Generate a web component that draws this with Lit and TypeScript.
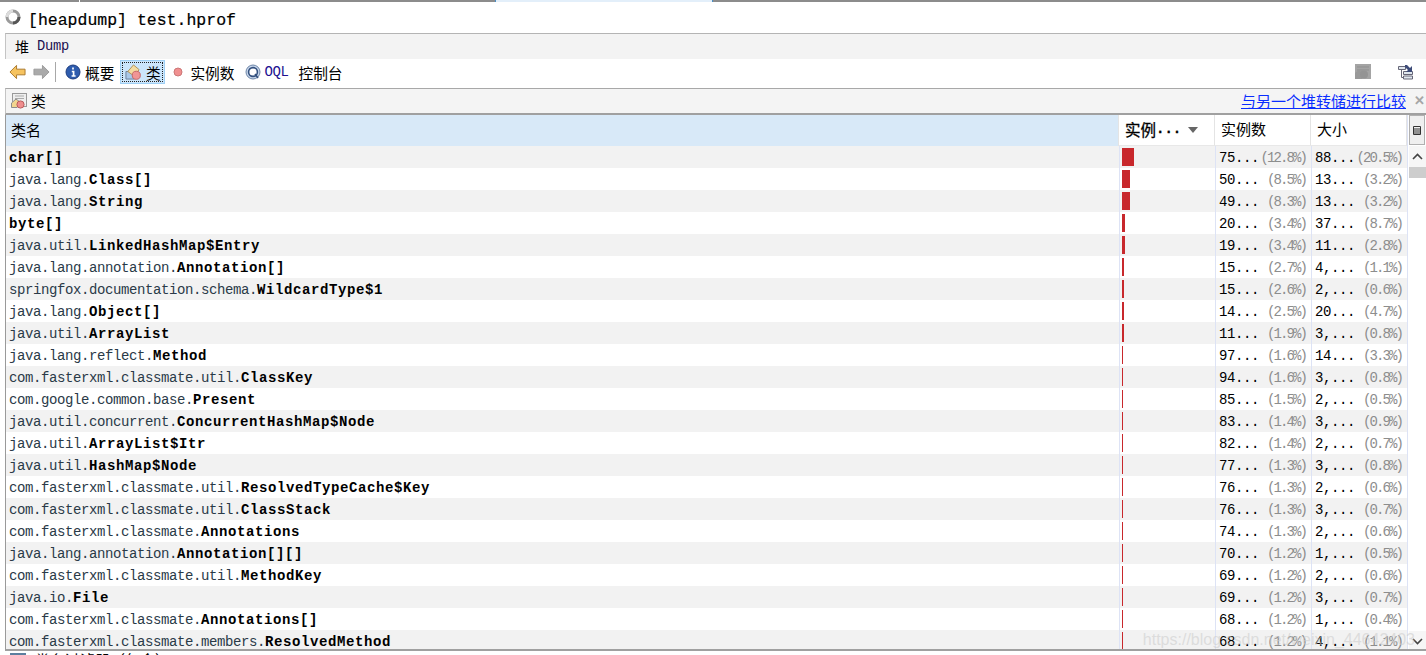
import { LitElement, html, css, svg } from "lit";
import { customElement } from "lit/decorators.js";

type Row = [string, string, string, string, string, string, number];
const rows: Row[] = [
  ["", "char[]", "75", "12.8", "88", "20.5", 12],
  ["java.lang.", "Class[]", "50", "8.5", "13", "3.2", 8],
  ["java.lang.", "String", "49", "8.3", "13", "3.2", 8],
  ["", "byte[]", "20", "3.4", "37", "8.7", 3],
  ["java.util.", "LinkedHashMap$Entry", "19", "3.4", "11", "2.8", 3],
  ["java.lang.annotation.", "Annotation[]", "15", "2.7", "4,", "1.1", 2],
  ["springfox.documentation.schema.", "WildcardType$1", "15", "2.6", "2,", "0.6", 2],
  ["java.lang.", "Object[]", "14", "2.5", "20", "4.7", 2],
  ["java.util.", "ArrayList", "11", "1.9", "3,", "0.8", 2],
  ["java.lang.reflect.", "Method", "97", "1.6", "14", "3.3", 1],
  ["com.fasterxml.classmate.util.", "ClassKey", "94", "1.6", "3,", "0.8", 1],
  ["com.google.common.base.", "Present", "85", "1.5", "2,", "0.5", 1],
  ["java.util.concurrent.", "ConcurrentHashMap$Node", "83", "1.4", "3,", "0.9", 1],
  ["java.util.", "ArrayList$Itr", "82", "1.4", "2,", "0.7", 1],
  ["java.util.", "HashMap$Node", "77", "1.3", "3,", "0.8", 1],
  ["com.fasterxml.classmate.util.", "ResolvedTypeCache$Key", "76", "1.3", "2,", "0.6", 1],
  ["com.fasterxml.classmate.util.", "ClassStack", "76", "1.3", "3,", "0.7", 1],
  ["com.fasterxml.classmate.", "Annotations", "74", "1.3", "2,", "0.6", 1],
  ["java.lang.annotation.", "Annotation[][]", "70", "1.2", "1,", "0.5", 1],
  ["com.fasterxml.classmate.util.", "MethodKey", "69", "1.2", "2,", "0.6", 1],
  ["java.io.", "File", "69", "1.2", "3,", "0.7", 1],
  ["com.fasterxml.classmate.", "Annotations[]", "68", "1.2", "1,", "0.4", 1],
  ["com.fasterxml.classmate.members.", "ResolvedMethod", "68", "1.2", "4,", "1.1", 1],
];

const classIcon = svg`<svg class="ic16" viewBox="0 0 17 17"><path d="M1 8h9v8H1z" fill="#a9c8e8" stroke="#6b7f99"/><path d="M3 8 9 1l6 5-5 7z" fill="#f4dba0" stroke="#b08f52"/><circle cx="12" cy="12" r="4.300" fill="#f09595" stroke="#c26464"/></svg>`;
const tabIcon = svg`<svg class="ic16" viewBox="0 0 16 16"><rect x="1.500" y=".5" width="14" height="13" fill="#eee" stroke="#999"/><path d="M4 3h9M4 5.500h9" stroke="#aaa"/><path d="M.5 10 5 6l4 3-3 5.500H.5z" fill="#f2d58f" stroke="#8d8d8d"/><circle cx="9.500" cy="11.500" r="3.600" fill="#ef8d8d" stroke="#b95a5a"/></svg>`;

@customElement("app-root")
export class AppRoot extends LitElement {
  static styles = css`
    :host { display: block; width: 1426px; height: 655px; overflow: hidden; background: #fff; position: relative; font-family: "Noto Sans CJK SC", sans-serif; color: #000; }
    .tabs { height: 2px; display: flex; background: #fff; }
    .tabs div { height: 2px; box-sizing: border-box; background: #8c8c8c; }
    .tabs .t1 { width: 80px; border-right: 1px solid #fff; }
    .tabs .t2 { width: 416px; border-right: 1px solid #4b8fc4; }
    .tabs .t3 { width: 217px; background: #e3effa; border-right: 1px solid #4b8fc4; }
    .tabs .t4 { flex: 1; }
    .title { height: 31px; box-sizing: border-box; display: flex; align-items: center; gap: 7px; padding: 0 0 0 5px; font: 16.500px/31px "Liberation Mono", monospace; white-space: pre; -webkit-text-stroke: .2px #000; }
    .spin { width: 16px; height: 16px; margin-top: -2px; }
    .title span { padding-top: 5px; }
    .sub { margin-left: 5px; height: 25px; background: #f3f3f3; border-top: 1px solid #b4b4b4; border-left: 1px solid #c4c4c4; display: flex; align-items: center; padding-left: 9px; gap: 8px; font-size: 14px; line-height: 23px; }
    .sub .en { font: 13.750px "Liberation Mono", monospace; letter-spacing: -.25px; color: #201050; }
    .bar { height: 29px; box-sizing: border-box; padding: 0 0 3px 9px; display: flex; align-items: center; font-size: 14.700px; white-space: nowrap; }
    .bar svg { flex: none; }
    .sep { width: 1px; height: 20px; background: #a8a8a8; margin: 0 9px 0 5px; }
    .item { display: flex; align-items: center; gap: 4px; }
    .fwd { margin-left: 7px; }
    .sel { height: 24px; width: 45px; box-sizing: border-box; margin: 0 8px 0 6px; background: #cbe5fb; border: 1px solid #9fd0f5; outline: 1px dotted #222; outline-offset: -3px; justify-content: center; gap: 5px; }
    .count { gap: 7px; }
    .oql { margin-left: 11px; gap: 3px; }
    .ql { font: 14px "Liberation Mono", monospace; letter-spacing: -.4px; color: #201090; }
    .console { margin-left: 7px; }
    .spacer { flex: 1; }
    .tool2 { margin: 0 12px 0 27px; }
    .ic16 { width: 16px; height: 16px; display: block; }
    .panelHead { height: 27px; box-sizing: border-box; background: #f4f4f4; margin-left: 5px; border-top: 1px solid #a8a8a8; border-left: 1px solid #c4c4c4; border-bottom: 2px solid #a0a0a0; display: flex; align-items: center; padding: 0 0 1px 5px; gap: 4px; font-size: 14.700px; }
    .link { color: #0a2dff; text-decoration: underline; font-size: 15px; margin: 0 2px 0 auto; }
    .close { color: #a6a6a6; font: bold 13px "Liberation Sans", sans-serif; width: 14px; text-align: center; }
    .table { margin-left: 5px; border-left: 1px solid #9a9a9a; height: 536px; overflow: hidden; position: relative; display: grid; grid-template-columns: 1fr 19px; border-bottom: 2px solid #a0a0a0; box-sizing: border-box; }
    .head { display: grid; grid-template-columns: 1113px 96px 96px 96px; height: 31px; box-sizing: border-box; }
    .head > div { display: flex; align-items: center; padding: 0 0 3px 6px; font-size: 15px; border-right: 1px solid #e4e4e4; border-bottom: 1px solid #e8e8e8; box-sizing: border-box; }
    .head .name { background: #d8e9f8; border-bottom: 0; padding-left: 5px; }
    .head .act { font-size: 15.500px; -webkit-text-stroke: .3px #000; }
    .dots { font: bold 14px "Liberation Mono", monospace; }
    .tri { width: 0; height: 0; border: 5px solid transparent; border-top: 6px solid #666; border-bottom: 0; margin: 3px 0 0 7px; }
    .row { display: grid; grid-template-columns: 1113px 96px 96px 96px; height: 22px; font: 14px/25px "Liberation Mono", monospace; letter-spacing: -.4px; }
    .row:nth-child(odd) { background: #f2f2f2; }
    .row > div { box-sizing: border-box; }
    .cn { padding-left: 3px; color: #2a3a48; white-space: nowrap; overflow: hidden; }
    .cn b { color: #000; letter-spacing: .6px; }
    .barc { padding: 2px 0 2px 2px; border-left: 1px solid #dde3f5; }
    .fill { background: #c8282c; height: 18px; }
    .num { display: flex; justify-content: space-between; padding: 0 5px 0 3px; border-left: 1px solid #dde3f5; white-space: nowrap; }
    .num i { font-style: normal; font-size: 14px; letter-spacing: -1.900px; color: #8d8d8d; }
    .scroll { display: flex; flex-direction: column; background: #fff; border-left: 1px solid #dde3f5; padding-left: 1px; }
    .corner { width: 16px; height: 30px; box-sizing: border-box; margin-bottom: 1px; background: #efefef; border: 1px solid #b0b0b0; display: flex; align-items: center; justify-content: center; }
    .arrow { height: 21px; display: flex; align-items: center; justify-content: center; background: #f6f6f6; }
    .thumb { height: 11px; background: #cdcdcd; }
    .track { flex: 1; background: #fff; }
    .mark { position: absolute; right: 11px; bottom: 0; color: rgba(205, 205, 205, .6); font: 16px "Liberation Sans", sans-serif; }
    .foot { height: 4px; overflow: hidden; display: flex; gap: 9px; padding-left: 10px; font-size: 15px; line-height: 20px; }
    .foot i { display: block; width: 16px; height: 2px; margin-top: 2px; background: #5d7f9f; }
    .foot span { margin-top: -1px; }
  `;

  render() {
    return html`
      <div class="tabs"><div class="t1"></div><div class="t2"></div><div class="t3"></div><div class="t4"></div></div>
      <div class="title">
        <svg class="spin" viewBox="0 0 16 16"><circle cx="8" cy="8" r="6" fill="none" stroke="#9a9a9a" stroke-width="3"/><path d="M2 8a6 6 0 0 1 6-6" fill="none" stroke="#dcdcdc" stroke-width="3"/><path d="M8 14a6 6 0 0 0 6-6" fill="none" stroke="#555" stroke-width="3"/></svg>
        <span>[heapdump] test.hprof</span>
      </div>
      <div class="sub"><span>堆</span><span class="en">Dump</span></div>
      <div class="bar">
        <svg width="17" height="16" viewBox="0 0 18 16"><path d="M8 1 1 8l7 7v-4h9V5H8z" fill="#f6c35f" stroke="#a9772a"/></svg>
        <svg class="fwd" width="17" height="16" viewBox="0 0 18 16"><path d="M10 1l7 7-7 7v-4H1V5h9z" fill="#aaa" stroke="#999"/></svg>
        <span class="sep"></span>
        <span class="item"><svg class="ic16" viewBox="0 0 16 16"><circle cx="8" cy="8" r="7" fill="#2e5cae" stroke="#1d3d80"/><path d="M8 3.500v2M6.800 7.500H8.600V12M6.600 12h4" stroke="#fff" stroke-width="1.700" fill="none"/></svg>概要</span>
        <span class="item sel">${classIcon}<span>类</span></span>
        <span class="item count"><svg width="10" height="10" viewBox="0 0 10 10"><circle cx="5" cy="5" r="4" fill="#f09090" stroke="#c77"/></svg><span>实例数</span></span>
        <span class="item oql"><svg class="ic16" viewBox="0 0 16 16"><circle cx="8" cy="8" r="7" fill="#c5d4ea" stroke="#6f87a8"/><circle cx="8" cy="8" r="4.400" fill="#fff" stroke="#33507e" stroke-width="1.600"/><path d="M10 10l3 4" stroke="#33507e" stroke-width="1.600"/></svg><span class="ql">OQL</span><span class="console">控制台</span></span>
        <span class="spacer"></span>
        <svg class="ic16" viewBox="0 0 16 16"><rect width="16" height="15" fill="#a4a4a4"/><path d="M2 3h12M2 6h12" stroke="#8f8f8f"/><path d="M0 9l5-4 4 3-2 7H0z" fill="#999"/><circle cx="9" cy="10.500" r="4" fill="#949494"/></svg>
        <svg class="ic16 tool2" viewBox="0 0 16 16"><path d="M.5 2.500h7v3h-7zM5.500 7.500h9v3h-9zM5.500 12h9v3h-9z" fill="#dfe6ee" stroke="#667"/><path d="M3.500 5.500v8h2" fill="none" stroke="#667"/><path d="M7 1h2l3 3 2-2v6H8l2-2-3-3z" fill="#3c4a78"/></svg>
      </div>
      <div class="panelHead">${tabIcon}<span>类</span><a class="link">与另一个堆转储进行比较</a><span class="close">✕</span></div>
      <div class="table">
        <div>
          <div class="head">
            <div class="name">类名</div>
            <div class="act"><span>实例</span><span class="dots">...</span><span class="tri"></span></div>
            <div>实例数</div>
            <div>大小</div>
          </div>
          <div>
            ${rows.map(r => html`<div class="row">
              <div class="cn">${r[0]}<b>${r[1]}</b></div>
              <div class="barc"><div class="fill" style="width:${r[6]}px"></div></div>
              <div class="num"><span>${r[2]}...</span><i>(${r[3]}%)</i></div>
              <div class="num"><span>${r[4]}...</span><i>(${r[5]}%)</i></div>
            </div>`)}
          </div>
        </div>
        <div class="scroll">
          <div class="corner"><svg width="8" height="9" viewBox="0 0 8 9"><path d="M.5.500h7v8h-7zM.5 3h7M.5 5h7M.5 7h7" fill="none" stroke="#333"/></svg></div>
          <div class="arrow"><svg width="11" height="7" viewBox="0 0 11 7"><path d="M1 6l4.500-4.500L10 6" fill="none" stroke="#444" stroke-width="1.600"/></svg></div>
          <div class="thumb"></div>
          <div class="track"></div>
          <div class="arrow"><svg width="11" height="7" viewBox="0 0 11 7"><path d="M1 1l4.500 4.500L10 1" fill="none" stroke="#444" stroke-width="1.600"/></svg></div>
        </div>
        <div class="mark">https://blog.csdn.net/weixin_44642403</div>
      </div>
      <div class="foot"><i></i><span>类名过滤器（包含）</span></div>
    `;
  }
}
